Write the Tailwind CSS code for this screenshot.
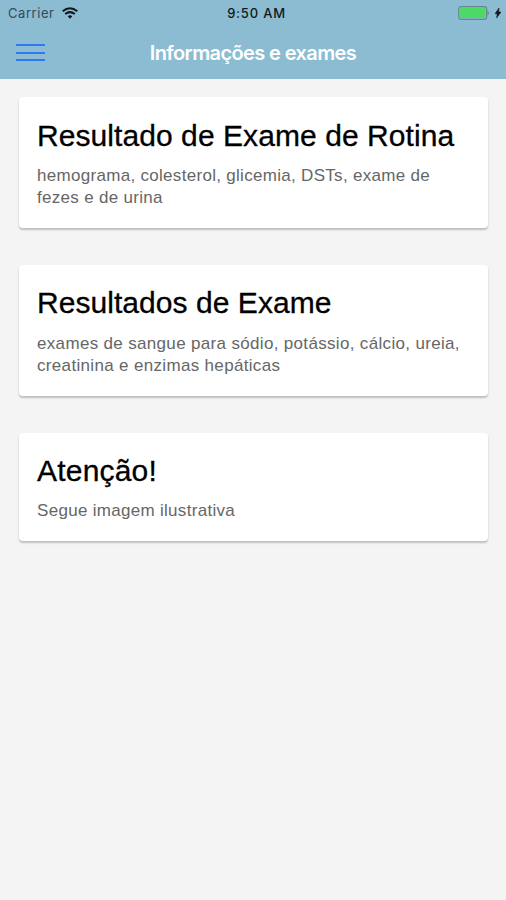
<!DOCTYPE html>
<html lang="pt-BR"><head><meta charset="utf-8"><title>Informações e exames</title>
<script src="https://cdn.jsdelivr.net/npm/@tailwindcss/browser@4"></script></head>
<body class="min-h-screen bg-[#f4f4f4] font-['Liberation_Sans',sans-serif]">
<header class="h-[79px] bg-[#8bbcd1]">
<div class="grid grid-cols-3 h-[26px] items-center pl-2 pr-[5px] font-[Inter,sans-serif] text-[13px] leading-[26px] text-[#10191d]">
<div class="flex items-center gap-[7px]"><span class="w-[47px] tracking-[0.55px] text-[#354a54]">Carrier</span>
<svg class="w-[16px] h-[12px]" viewBox="0 0 16 12" fill="none" stroke="#10171a" stroke-width="2"><path d="M.7 4.3Q8-1.8 15.3 4.3M3.2 7Q8 3.2 12.8 7"/><path d="M5.7 9.2Q8 7.4 10.3 9.2L8 11.8Z" fill="#10171a" stroke="none"/></svg></div>
<span class="text-center font-medium tracking-[0.8px] whitespace-nowrap pl-[4px]">9:50 AM</span>
<div class="flex items-center justify-end gap-[5px]">
<svg class="w-[32px] h-[14px]" viewBox="0 0 32 14"><rect x=".7" y=".7" width="28" height="12.6" rx="2.5" fill="none" stroke="#648793" stroke-width="1.2"/><rect x="2" y="2" width="25.4" height="10" rx="1" fill="#4cda64"/><path d="M29.5 4.7Q32.5 7 29.5 9.3Z" fill="#648793"/></svg>
<svg class="w-[6px] h-[10px]" viewBox="0 0 6 10"><path d="M4 0L0 5.7H2.2L1.6 10L6 4H3.7Z" fill="#10171a" stroke="#10171a" stroke-width=".5"/></svg></div></div>
<div class="grid grid-cols-[46px_1fr_46px] h-[53px] items-center">
<button aria-label="Menu" class="ml-4 w-[29px] h-[17px] flex flex-col justify-between"><i class="h-[2px] w-full bg-[#2f79f5]"></i><i class="h-[2px] w-full bg-[#2f79f5]"></i><i class="h-[2px] w-full bg-[#2f79f5]"></i></button>
<h1 class="text-center font-[Inter,sans-serif] text-[20px] font-semibold tracking-[-0.6px] whitespace-nowrap text-white">Informações e exames</h1></div>
</header>
<main class="flex flex-col gap-[37px] pl-[19px] pr-[18px] pt-[18px] pb-6">
<article class="h-[131px] rounded-[4px] bg-white pl-[18px] pt-[21px] shadow-[0_2px_2px_#00000038]"><h2 class="text-[30px] leading-9 tracking-[0.07px] [-webkit-text-stroke:0.3px_black] text-black whitespace-nowrap">Resultado de Exame de Rotina</h2><p class="mt-[11px] text-[17px] leading-[22px] tracking-[0.3px] whitespace-nowrap text-[#666]">hemograma, colesterol, glicemia, DSTs, exame de<br>fezes e de urina</p></article>
<article class="h-[131px] rounded-[4px] bg-white pl-[18px] pt-[20px] shadow-[0_2px_2px_#00000038]"><h2 class="text-[30px] leading-9 tracking-[0.05px] [-webkit-text-stroke:0.3px_black] text-black whitespace-nowrap">Resultados de Exame</h2><p class="mt-[12px] text-[17px] leading-[22px] tracking-[0.33px] whitespace-nowrap text-[#666]">exames de sangue para sódio, potássio, cálcio, ureia,<br>creatinina e enzimas hepáticas</p></article>
<article class="h-[108px] rounded-[4px] bg-white pl-[18px] pt-[20px] shadow-[0_2px_2px_#00000038]"><h2 class="text-[30px] leading-9 tracking-[0.2px] [-webkit-text-stroke:0.3px_black] text-black whitespace-nowrap">Atenção!</h2><p class="mt-[11px] text-[17px] leading-[22px] tracking-[0.3px] whitespace-nowrap text-[#666]">Segue imagem ilustrativa</p></article>
</main></body></html>
